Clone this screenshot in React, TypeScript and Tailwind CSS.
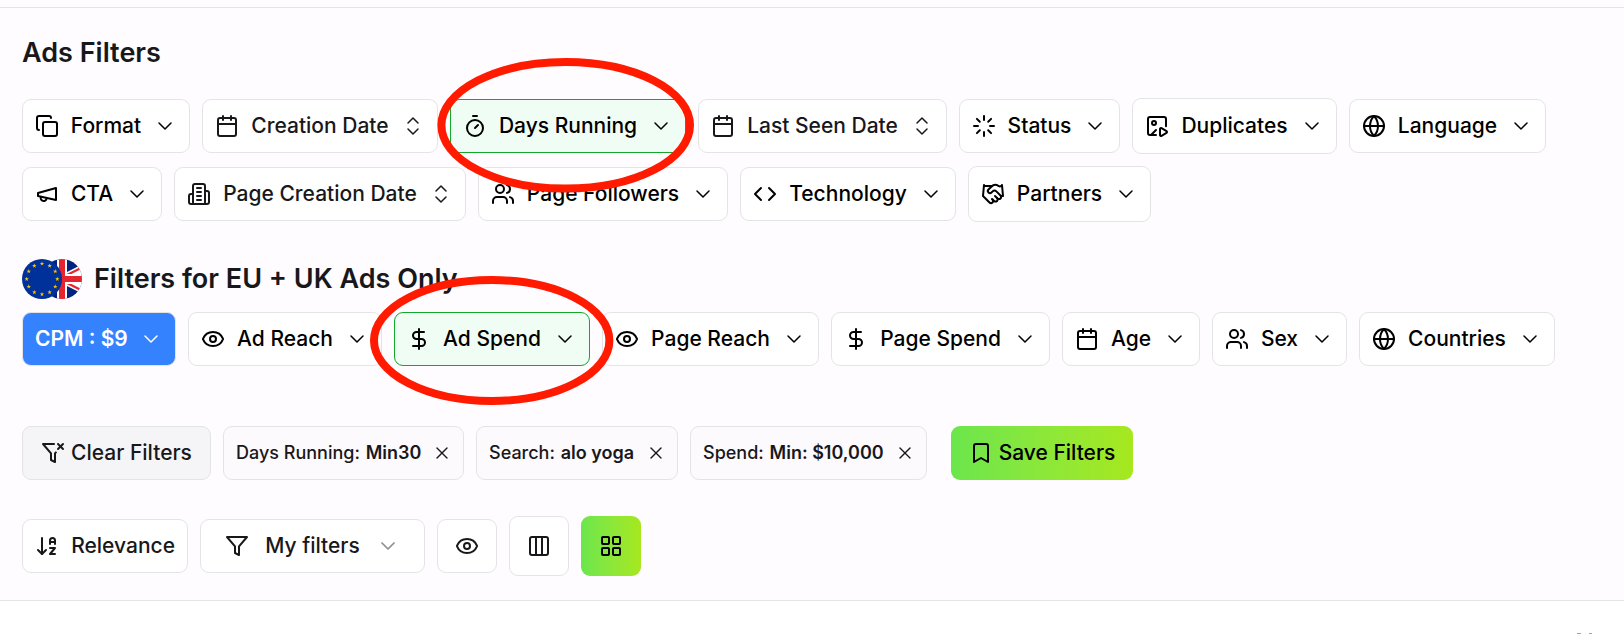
import type { ReactNode } from 'react'
import {
    Bookmark,
    Calendar,
    ChevronDown,
    ChevronsUpDown,
    Code,
    Columns3,
    Copy,
    DollarSign,
    Eye,
    Globe,
    ImagePlay,
    LayoutGrid,
    Loader,
    Timer,
    X,
} from 'lucide-react'

const Svg = ({ children }: { children: ReactNode }) => (
    <svg
        className="size-6 shrink-0"
        viewBox="0 0 24 24"
        fill="none"
        stroke="currentColor"
        strokeWidth={2}
        strokeLinecap="round"
        strokeLinejoin="round"
    >
        {children}
    </svg>
)

const MegaphoneIcon = () => (
    <Svg>
        <path d="m3 11 18-5v12L3 14v-3z" />
        <path d="M11.6 16.8a3 3 0 1 1-5.8-1.6" />
    </Svg>
)

const BuildingIcon = () => (
    <Svg>
        <path d="M6 22V4a2 2 0 0 1 2-2h8a2 2 0 0 1 2 2v18Z" />
        <path d="M6 12H4a2 2 0 0 0-2 2v6a2 2 0 0 0 2 2h2" />
        <path d="M18 9h2a2 2 0 0 1 2 2v9a2 2 0 0 1-2 2h-2" />
        <path d="M10 6h4M10 10h4M10 14h4M10 18h4" />
    </Svg>
)

const PeopleIcon = () => (
    <Svg>
        <path d="M16 21v-2a4 4 0 0 0-4-4H6a4 4 0 0 0-4 4v2" />
        <circle cx="9" cy="7" r="4" />
        <path d="M22 21v-2a4 4 0 0 0-3-3.87" />
        <path d="M16 3.13a4 4 0 0 1 0 7.75" />
    </Svg>
)

const HandshakeIcon = () => (
    <Svg>
        <path d="m11 17 2 2a1 1 0 1 0 3-3" />
        <path d="m14 14 2.5 2.5a1 1 0 1 0 3-3l-3.88-3.88a3 3 0 0 0-4.24 0l-.88.88a1 1 0 1 1-3-3l2.81-2.81a5.79 5.79 0 0 1 7.06-.87l.47.28a2 2 0 0 0 1.42.25L21 4" />
        <path d="m21 3 1 11h-2" />
        <path d="M3 3 2 14l6.5 6.5a1 1 0 1 0 3-3" />
        <path d="M3 4h8" />
    </Svg>
)

const FilterIcon = () => (
    <Svg>
        <path d="M22 3H2l8 9.46V19l4 2v-8.54L22 3z" />
    </Svg>
)

const FilterXIcon = () => (
    <Svg>
        <path d="M13.013 3H2l8 9.46V19l4 2v-8.54l.9-1.055" />
        <path d="m22 3-5 5" />
        <path d="m17 3 5 5" />
    </Svg>
)

const SortIcon = () => (
    <Svg>
        <path d="m3 16 4 4 4-4" />
        <path d="M7 20V4" />
        <path d="M20 8h-5" />
        <path d="M15 10V6.5a2.5 2.5 0 0 1 5 0V10" />
        <path d="M15 14h5l-5 6h5" />
    </Svg>
)

const stars = Array.from({ length: 12 }, (_, i) => {
    const a = (i * Math.PI) / 6
    return { x: 20 + 15.3 * Math.sin(a), y: 20 - 15.3 * Math.cos(a) }
})

const Flags = () => (
    <svg className="h-10 w-[60px] shrink-0" viewBox="0 0 60 40">
        <clipPath id="uk">
            <circle cx="40" cy="20" r="20" />
        </clipPath>
        <g clipPath="url(#uk)">
            <rect x="20" width="40" height="40" fill="#00247d" />
            <path d="M0 0l80 40M80 0L0 40" stroke="#fff" strokeWidth="8" />
            <path d="M40 18.4L80-1.6M40 21.6l40 20" stroke="#e4252f" strokeWidth="2.2" />
            <path d="M40 0v40M20 20h40" stroke="#fff" strokeWidth="10" />
            <path d="M40 0v40M20 20h40" stroke="#e4252f" strokeWidth="6" />
        </g>
        <circle cx="20" cy="20" r="20" fill="#00309a" />
        {stars.map((s, i) => (
            <path
                key={i}
                transform={`translate(${s.x} ${s.y})`}
                d="M0-2.3.6-.7 2.2-.7.9.3 1.4 1.9 0 .9-1.4 1.9-.9.3-2.2-.7-.6-.7z"
                fill="#f8c300"
            />
        ))}
    </svg>
)

type FilterProps = {
    icon: ReactNode
    label: string
    width: string
    date?: boolean
    tall?: boolean
    active?: boolean
}

const Filter = ({ icon, label, width, date, tall, active }: FilterProps) => (
    <button
        className={`flex shrink-0 items-center justify-between rounded-[9px] border px-3 whitespace-nowrap ${width} ${
            tall ? 'h-14' : 'h-[54px]'
        } ${active ? 'border-[#12a82c] bg-[#f0fdf4]' : 'border-[#e4e4e7] bg-white'} ${
            date ? 'text-[#18181b]' : 'text-black'
        }`}
    >
        {icon}
        <span>{label}</span>
        {date ? (
            <ChevronsUpDown className="size-6 shrink-0" strokeWidth={1.5} />
        ) : (
            <ChevronDown className="size-6 shrink-0" strokeWidth={1.5} />
        )}
    </button>
)

const Chip = ({ name, value, width }: { name: string; value: string; width: string }) => (
    <div
        className={`flex h-[54px] items-center justify-between rounded-[9px] border border-[#e4e4e7] bg-[#fcfafd] pr-[11px] pl-3 text-lg whitespace-nowrap text-[#18181b] ${width}`}
    >
        <span>
            {name}: <span className="ml-px font-semibold">{value}</span>
        </span>
        <X className="size-5" strokeWidth={1.6} />
    </div>
)

const App = () => {
    return (
        <div className="relative flex h-[634px] w-[1624px] flex-col overflow-hidden bg-white font-['Inter',sans-serif] text-[21px] leading-[30px] font-medium">
            <div className="h-[7px] shrink-0 bg-[#fefcff]" />
            <main className="h-[594px] shrink-0 border-y border-[#e4e4e7] bg-[#fefcff] px-[22px] pt-[25px]">
                <h2 className="text-[27px] leading-10 font-semibold text-[#18181b]">Ads Filters</h2>

                <div className="mt-[25px] flex items-center gap-3">
                    <Filter icon={<Copy className="size-6" />} label="Format" width="w-[168px]" />
                    <Filter icon={<Calendar className="size-6" />} label="Creation Date" width="w-[236px]" date />
                    <Filter icon={<Timer className="size-6" />} label="Days Running" width="w-[236px]" active />
                    <Filter icon={<Calendar className="size-6" />} label="Last Seen Date" width="w-[249px]" date />
                    <Filter icon={<Loader className="size-6" />} label="Status" width="w-[161px]" />
                    <Filter icon={<ImagePlay className="size-6" />} label="Duplicates" width="w-[205px]" tall />
                    <Filter icon={<Globe className="size-6" />} label="Language" width="w-[197px]" />
                </div>
                <div className="mt-3 flex items-center gap-3">
                    <Filter icon={<MegaphoneIcon />} label="CTA" width="w-[140px]" />
                    <Filter icon={<BuildingIcon />} label="Page Creation Date" width="w-[292px]" date />
                    <Filter icon={<PeopleIcon />} label="Page Followers" width="w-[250px]" />
                    <Filter icon={<Code className="size-6" />} label="Technology" width="w-[216px]" />
                    <Filter icon={<HandshakeIcon />} label="Partners" width="w-[183px]" tall />
                </div>

                <div className="mt-[37px] flex items-center gap-3">
                    <Flags />
                    <h2 className="text-[27px] leading-10 font-semibold text-[#18181b]">Filters for EU + UK Ads Only</h2>
                </div>
                <div className="mt-[13px] flex items-center gap-3">
                    <button className="flex h-[54px] w-[154px] items-center justify-between rounded-[9px] border border-[#e4e4e7] bg-[#3582ff] px-3 font-semibold whitespace-nowrap text-white">
                        <span>CPM : $9</span>
                        <ChevronDown className="size-6" strokeWidth={1.5} />
                    </button>
                    <Filter icon={<Eye className="size-6" />} label="Ad Reach" width="w-[194px]" />
                    <Filter icon={<DollarSign className="size-6" />} label="Ad Spend" width="w-[196px]" active />
                    <Filter icon={<Eye className="size-6" />} label="Page Reach" width="w-[217px]" />
                    <Filter icon={<DollarSign className="size-6" />} label="Page Spend" width="w-[219px]" />
                    <Filter icon={<Calendar className="size-6" />} label="Age" width="w-[138px]" />
                    <Filter icon={<PeopleIcon />} label="Sex" width="w-[135px]" />
                    <Filter icon={<Globe className="size-6" />} label="Countries" width="w-[196px]" />
                </div>

                <div className="mt-[60px] flex items-center gap-3">
                    <button className="flex h-[54px] w-[189px] items-center justify-center gap-1.5 rounded-[9px] border border-[#e4e4e7] bg-[#f5f4f6] whitespace-nowrap text-[#18181b]">
                        <FilterXIcon />
                        Clear Filters
                    </button>
                    <Chip name="Days Running" value="Min30" width="w-[241px]" />
                    <Chip name="Search" value="alo yoga" width="w-[202px]" />
                    <Chip name="Spend" value="Min: $10,000" width="w-[237px]" />
                    <button className="ml-3 flex h-[54px] w-[182px] items-center justify-center gap-1.5 rounded-[9px] bg-gradient-to-r from-[#6be64c] to-[#a6e81c] whitespace-nowrap text-black">
                        <Bookmark className="size-6" />
                        Save Filters
                    </button>
                </div>

                <div className="mt-9 flex items-center gap-3 text-[#18181b]">
                    <button className="flex h-[54px] w-[166px] items-center justify-between rounded-[9px] border border-[#e4e4e7] bg-white px-3 whitespace-nowrap">
                        <SortIcon />
                        Relevance
                    </button>
                    <button className="flex h-[54px] w-[225px] items-center justify-between rounded-[9px] border border-[#e4e4e7] bg-white px-6 whitespace-nowrap">
                        <FilterIcon />
                        My filters
                        <ChevronDown className="size-6 text-[#8f8f93]" strokeWidth={1.75} />
                    </button>
                    <button className="flex h-[54px] w-[60px] items-center justify-center rounded-[9px] border border-[#e4e4e7] bg-white">
                        <Eye className="size-6" />
                    </button>
                    <button className="flex size-[60px] items-center justify-center rounded-[9px] border border-[#e4e4e7] bg-white">
                        <Columns3 className="size-6" />
                    </button>
                    <button className="flex size-[60px] items-center justify-center rounded-[9px] bg-gradient-to-r from-[#6be64c] to-[#a6e81c] text-black">
                        <LayoutGrid className="size-6" />
                    </button>
                </div>
            </main>

            {/* next section, only its first pixel row is in view */}
            <div className="flex grow items-end justify-end gap-2 pr-8">
                <span className="h-px w-1 bg-[#a5a5a8]" />
                <span className="h-px w-[3px] bg-[#a5a5a8]" />
            </div>

            {/* marker circles around the two active filters */}
            <svg
                className="pointer-events-none absolute inset-0 h-full w-full"
                viewBox="0 0 1624 634"
                fill="none"
                stroke="#ff1a00"
                strokeWidth={8}
            >
                <ellipse cx="565.7" cy="125.3" rx="124.3" ry="63.3" />
                <ellipse cx="491.7" cy="340.5" rx="117.7" ry="60.5" />
            </svg>
        </div>
    )
}

export default App
